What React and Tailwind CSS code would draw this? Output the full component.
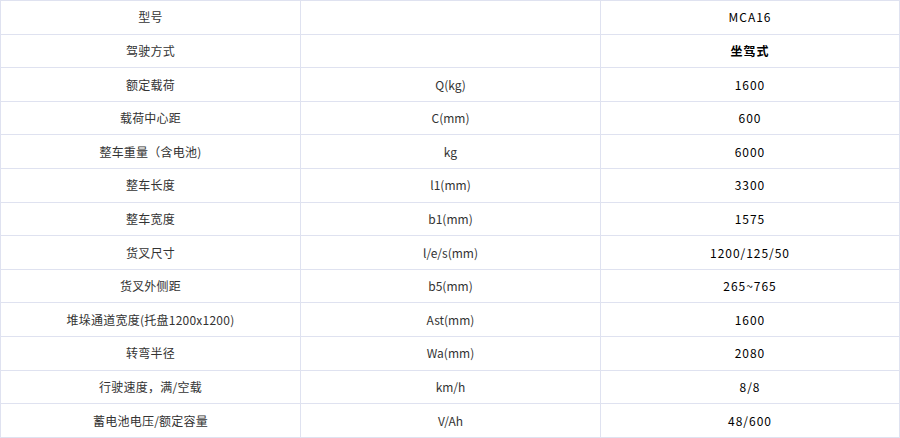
const rows = [
  ["型号", "", "MCA16"],
  ["驾驶方式", "", "坐驾式"],
  ["额定载荷", "Q(kg)", "1600"],
  ["载荷中心距", "C(mm)", "600"],
  ["整车重量（含电池)", "kg", "6000"],
  ["整车长度", "l1(mm)", "3300"],
  ["整车宽度", "b1(mm)", "1575"],
  ["货叉尺寸", "l/e/s(mm)", "1200/125/50"],
  ["货叉外侧距", "b5(mm)", "265~765"],
  ["堆垛通道宽度(托盘1200x1200)", "Ast(mm)", "1600"],
  ["转弯半径", "Wa(mm)", "2080"],
  ["行驶速度，满/空载", "km/h", "8/8"],
  ["蓄电池电压/额定容量", "V/Ah", "48/600"],
];

export default function App() {
  return (
    <div className="w-[900px] h-[438px] bg-white">
      <table
        className="w-[899px] h-[438px] border-collapse table-fixed text-[12px] text-center"
        style={{ fontFamily: '"Noto Sans CJK SC", "Noto Sans", sans-serif' }}
      >
        <colgroup>
          <col className="w-[300px]" />
          <col className="w-[300px]" />
          <col className="w-[299px]" />
        </colgroup>
        <tbody>
          {rows.map((r, i) => (
            <tr key={i}>
              <td className="border border-[#dfe2f0] text-[#333] tracking-[0.02em]">{r[0]}</td>
              <td className="border border-[#dfe2f0] text-[#333]">{r[1]}</td>
              <td className={`border border-[#dfe2f0] text-black tracking-[0.08em] ${i === 1 ? "font-bold" : "font-normal"}`}>
                {r[2]}
              </td>
            </tr>
          ))}
        </tbody>
      </table>
    </div>
  );
}
